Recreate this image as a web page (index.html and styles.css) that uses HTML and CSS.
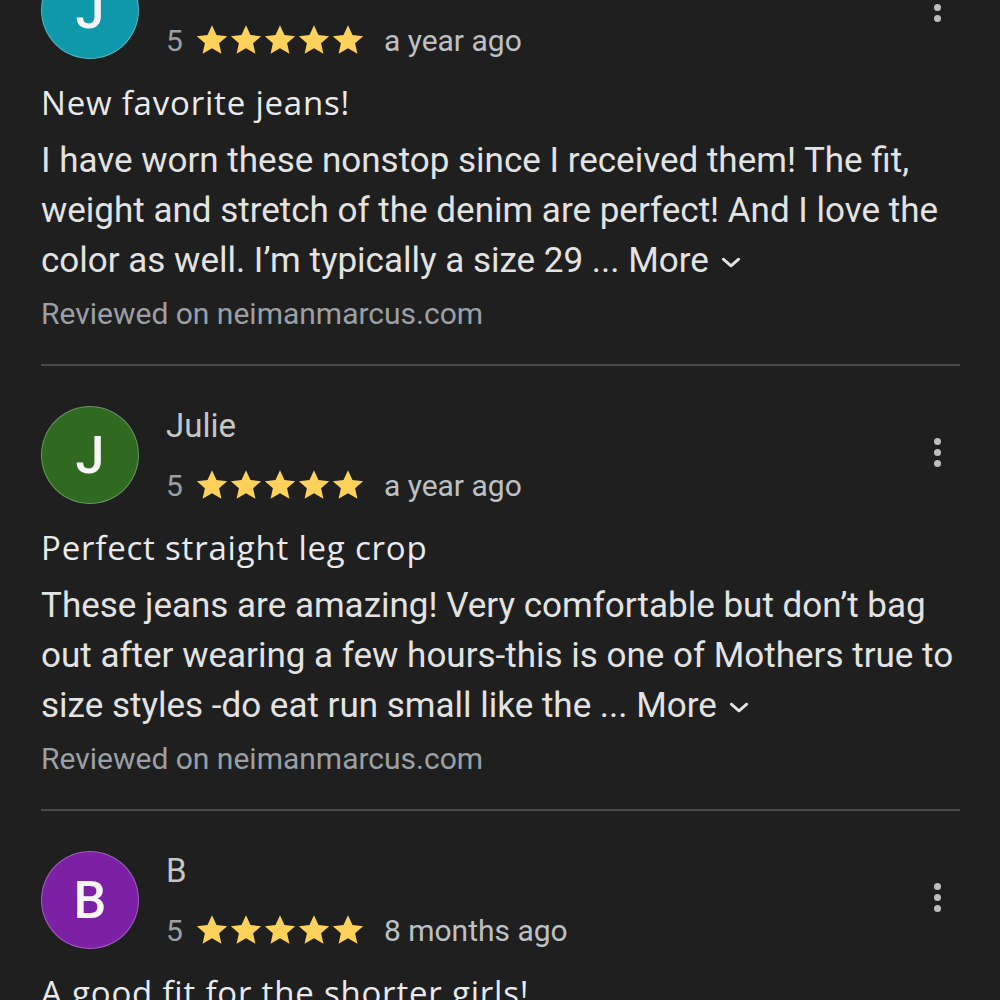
FILE: index.html
```html
<!DOCTYPE html>
<html lang="en">
<head>
  <meta charset="UTF-8" />
  <meta name="viewport" content="width=device-width, initial-scale=1.0" />
  <title>Reviews</title>
  <link rel="stylesheet" href="styles.css">
</head>
<body>
  <div class="reviews">

    <!-- Review 1 -->
    <div class="review">
      <div class="review-head">
        <div class="avatar teal">J</div>
        <div class="meta">
          <div class="name">J</div>
          <div class="rating">
            <span class="score">5</span>
            <span class="stars">
              <svg viewBox="1 1 22 22"><path d="M12 2.5l2.9 6.3 6.9.7-5.2 4.6 1.5 6.8L12 17.4l-6.1 3.5 1.5-6.8-5.2-4.6 6.9-.7z"/></svg>
              <svg viewBox="1 1 22 22"><path d="M12 2.5l2.9 6.3 6.9.7-5.2 4.6 1.5 6.8L12 17.4l-6.1 3.5 1.5-6.8-5.2-4.6 6.9-.7z"/></svg>
              <svg viewBox="1 1 22 22"><path d="M12 2.5l2.9 6.3 6.9.7-5.2 4.6 1.5 6.8L12 17.4l-6.1 3.5 1.5-6.8-5.2-4.6 6.9-.7z"/></svg>
              <svg viewBox="1 1 22 22"><path d="M12 2.5l2.9 6.3 6.9.7-5.2 4.6 1.5 6.8L12 17.4l-6.1 3.5 1.5-6.8-5.2-4.6 6.9-.7z"/></svg>
              <svg viewBox="1 1 22 22"><path d="M12 2.5l2.9 6.3 6.9.7-5.2 4.6 1.5 6.8L12 17.4l-6.1 3.5 1.5-6.8-5.2-4.6 6.9-.7z"/></svg>
            </span>
            <span class="date">a year ago</span>
          </div>
        </div>
        <div class="kebab"><span></span><span></span><span></span></div>
      </div>
      <h3 class="title">New favorite jeans!</h3>
      <p class="body">I have worn these nonstop since I received them! The fit, weight and stretch of the denim are perfect! And I love the color as well. I’m typically a size 29 ... <span class="more">More <svg viewBox="0 0 18 10"><polyline points="2,2 9,8 16,2"/></svg></span></p>
      <div class="source">Reviewed on neimanmarcus.com</div>
    </div>

    <!-- Review 2 -->
    <div class="review">
      <div class="review-head">
        <div class="avatar green">J</div>
        <div class="meta">
          <div class="name">Julie</div>
          <div class="rating">
            <span class="score">5</span>
            <span class="stars">
              <svg viewBox="1 1 22 22"><path d="M12 2.5l2.9 6.3 6.9.7-5.2 4.6 1.5 6.8L12 17.4l-6.1 3.5 1.5-6.8-5.2-4.6 6.9-.7z"/></svg>
              <svg viewBox="1 1 22 22"><path d="M12 2.5l2.9 6.3 6.9.7-5.2 4.6 1.5 6.8L12 17.4l-6.1 3.5 1.5-6.8-5.2-4.6 6.9-.7z"/></svg>
              <svg viewBox="1 1 22 22"><path d="M12 2.5l2.9 6.3 6.9.7-5.2 4.6 1.5 6.8L12 17.4l-6.1 3.5 1.5-6.8-5.2-4.6 6.9-.7z"/></svg>
              <svg viewBox="1 1 22 22"><path d="M12 2.5l2.9 6.3 6.9.7-5.2 4.6 1.5 6.8L12 17.4l-6.1 3.5 1.5-6.8-5.2-4.6 6.9-.7z"/></svg>
              <svg viewBox="1 1 22 22"><path d="M12 2.5l2.9 6.3 6.9.7-5.2 4.6 1.5 6.8L12 17.4l-6.1 3.5 1.5-6.8-5.2-4.6 6.9-.7z"/></svg>
            </span>
            <span class="date">a year ago</span>
          </div>
        </div>
        <div class="kebab"><span></span><span></span><span></span></div>
      </div>
      <h3 class="title">Perfect straight leg crop</h3>
      <p class="body">These jeans are amazing! Very comfortable but don’t bag out after wearing a few hours-this is one of Mothers true to size styles -do eat run small like the ... <span class="more">More <svg viewBox="0 0 18 10"><polyline points="2,2 9,8 16,2"/></svg></span></p>
      <div class="source">Reviewed on neimanmarcus.com</div>
    </div>

    <!-- Review 3 -->
    <div class="review">
      <div class="review-head">
        <div class="avatar purple">B</div>
        <div class="meta">
          <div class="name">B</div>
          <div class="rating">
            <span class="score">5</span>
            <span class="stars">
              <svg viewBox="1 1 22 22"><path d="M12 2.5l2.9 6.3 6.9.7-5.2 4.6 1.5 6.8L12 17.4l-6.1 3.5 1.5-6.8-5.2-4.6 6.9-.7z"/></svg>
              <svg viewBox="1 1 22 22"><path d="M12 2.5l2.9 6.3 6.9.7-5.2 4.6 1.5 6.8L12 17.4l-6.1 3.5 1.5-6.8-5.2-4.6 6.9-.7z"/></svg>
              <svg viewBox="1 1 22 22"><path d="M12 2.5l2.9 6.3 6.9.7-5.2 4.6 1.5 6.8L12 17.4l-6.1 3.5 1.5-6.8-5.2-4.6 6.9-.7z"/></svg>
              <svg viewBox="1 1 22 22"><path d="M12 2.5l2.9 6.3 6.9.7-5.2 4.6 1.5 6.8L12 17.4l-6.1 3.5 1.5-6.8-5.2-4.6 6.9-.7z"/></svg>
              <svg viewBox="1 1 22 22"><path d="M12 2.5l2.9 6.3 6.9.7-5.2 4.6 1.5 6.8L12 17.4l-6.1 3.5 1.5-6.8-5.2-4.6 6.9-.7z"/></svg>
            </span>
            <span class="date">8 months ago</span>
          </div>
        </div>
        <div class="kebab"><span></span><span></span><span></span></div>
      </div>
      <h3 class="title">A good fit for the shorter girls!</h3>
      <p class="body">Great jeans, they fit well and the length is right.</p>
      <div class="source">Reviewed on neimanmarcus.com</div>
    </div>

  </div>
</body>
</html>
```

FILE: styles.css
```css
* {
  margin: 0;
  padding: 0;
  box-sizing: border-box;
}

html,
body {
  height: 100%;
  overflow: hidden;
}

body {
  background: #1f1f1f;
  color: #e3e3e3;
  font-family: Roboto, "Liberation Sans", sans-serif;
}

.reviews {
  margin-top: -79px;
  padding: 0 40px 0 41px;
}

.review {
  padding: 40px 0 30px;
  border-bottom: 2px solid #4a4a4c;
}

.review-head {
  display: flex;
  align-items: flex-start;
}

.avatar {
  width: 98px;
  height: 98px;
  flex: none;
  border-radius: 50%;
  border: 1px solid rgba(255, 255, 255, 0.28);
  display: flex;
  justify-content: center;
  align-items: center;
  color: #f6f6f6;
  font-size: 52px;
  font-weight: 500;
  margin-right: 27px;
}

.avatar.teal {
  background: #1098ab;
}

.avatar.green {
  background: #2f6a20;
}

.avatar.purple {
  background: #7c20a6;
}

.meta {
  flex: 1;
}

.name {
  height: 40px;
  line-height: 40px;
  font-size: 33px;
  color: #c4c7c5;
}

.rating {
  margin-top: 19px;
  height: 40px;
  display: flex;
  align-items: center;
  font-size: 30px;
}

.score {
  color: #9aa0a6;
  margin-right: 12px;
}

.stars {
  display: flex;
  margin-right: 19px;
}

.stars svg {
  width: 34px;
  height: 34px;
  fill: #fdd15a;
}

.date {
  color: #bdc1c6;
}

.kebab {
  width: 46px;
  height: 92px;
  display: flex;
  flex-direction: column;
  justify-content: center;
  align-items: center;
  gap: 4px;
}

.kebab span {
  width: 7px;
  height: 7px;
  border-radius: 50%;
  background: #bdbdbd;
}

.title {
  margin-top: 19px;
  height: 50px;
  line-height: 48px;
  font-family: "Open Sans", Roboto, sans-serif;
  font-weight: 500;
  font-size: 33px;
  letter-spacing: 0.8px;
  color: #e8eaed;
}

.body {
  margin-top: 7px;
  margin-right: -12px;
  line-height: 50px;
  font-size: 35px;
  color: #e3e3e3;
}

.more {
  white-space: nowrap;
}

.more svg {
  width: 20px;
  height: 11px;
  margin-left: 3px;
  vertical-align: middle;
  fill: none;
  stroke: #e3e3e3;
  stroke-width: 2.6;
  stroke-linecap: round;
  stroke-linejoin: round;
}

.source {
  margin-top: 8px;
  height: 40px;
  line-height: 40px;
  font-size: 30px;
  color: #9aa0a6;
}
```
